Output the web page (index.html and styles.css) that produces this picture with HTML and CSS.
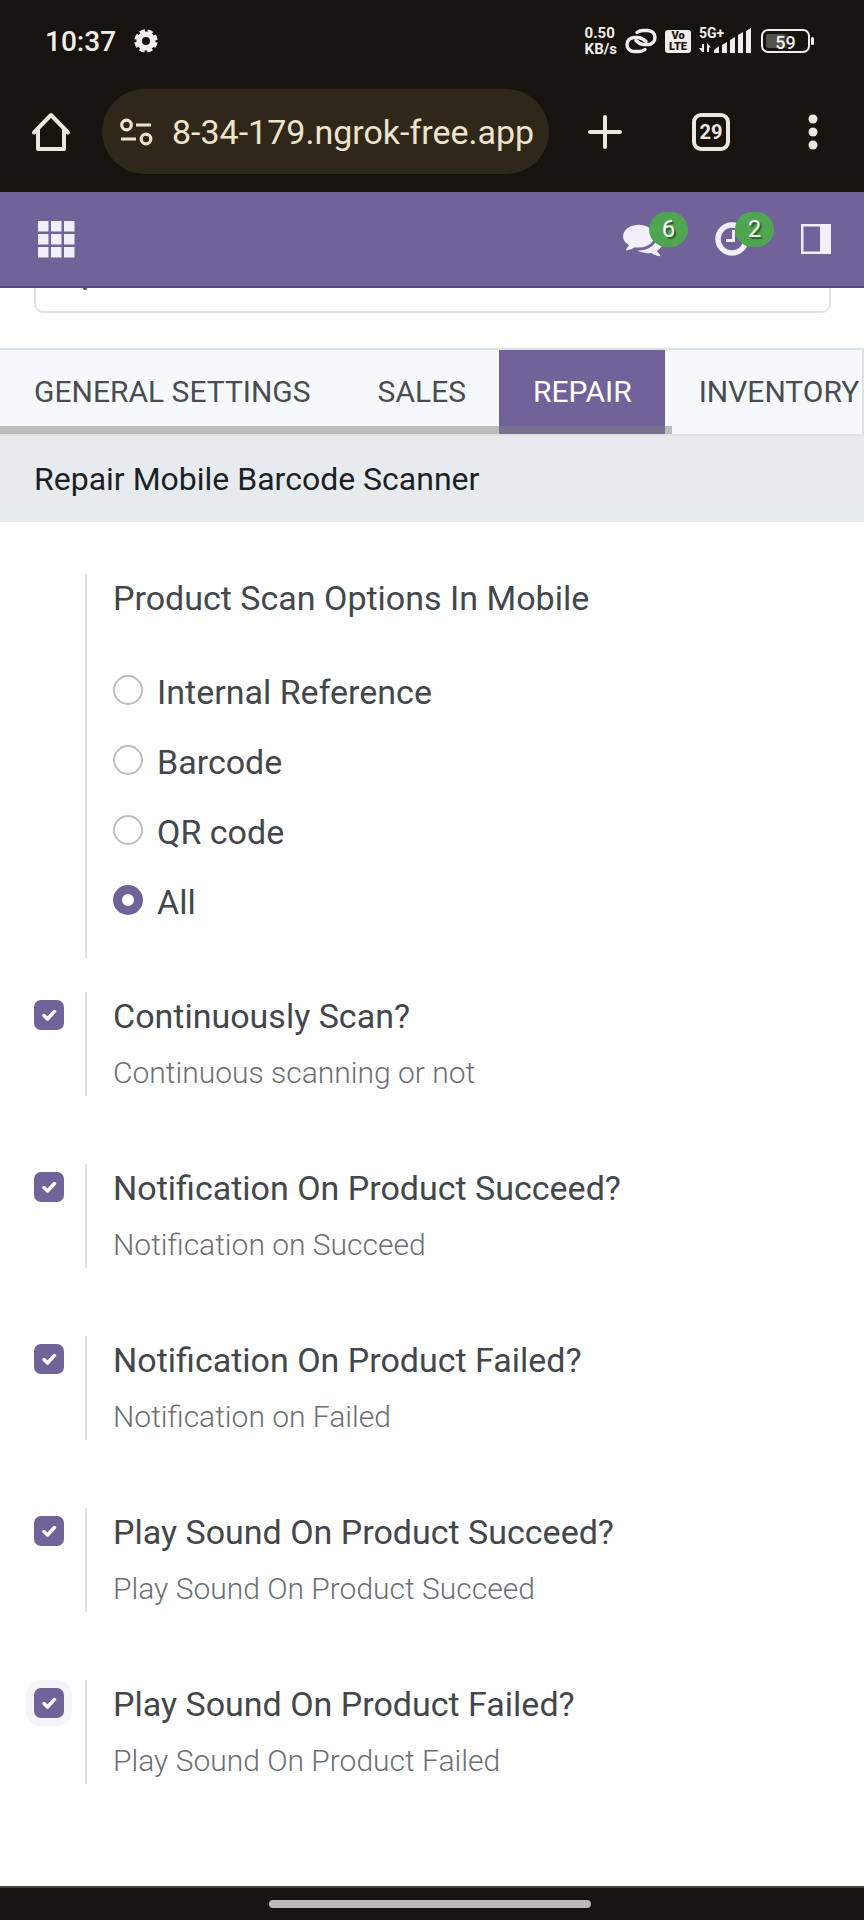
FILE: index.html
```html
<!DOCTYPE html>
<html lang="en">
<head>
    <meta charset="UTF-8">
    <meta name="viewport" content="width=device-width, initial-scale=1.0">
    <title>Settings</title>
    <link rel="stylesheet" href="styles.css">
</head>
<body>
    <!-- Phone status bar and browser toolbar -->
    <header class="browser">
        <div class="status-bar">
            <div class="status-left">
                <span class="clock">10:37</span>
                <svg class="gear" viewBox="0 0 24 24" width="24" height="24" fill="none" stroke="#f1ede9">
                    <circle cx="12" cy="12" r="6.800" stroke-width="5.600"/>
                    <circle cx="12" cy="12" r="10" stroke-width="3.400" stroke-dasharray="5.200 2.654" stroke-dashoffset="-1.300"/>
                </svg>
            </div>
            <div class="status-right">
                <div class="net-speed"><span>0.50</span><span>KB/s</span></div>
                <svg viewBox="0 0 32 26" width="32" height="26" fill="none" stroke="#f1ede9" stroke-width="3.400" stroke-linecap="round">
                    <path d="M12 4.500C14 3 16 2.500 18 2.500h5a7 7 0 0 1 0 14h-4c-3 0-5.500-1.500-8-4"/>
                    <path d="M20 21.500c-2 1.500-4 2-6 2H9a7 7 0 0 1 0-14h4c3 0 5.500 1.500 8 4"/>
                </svg>
                <div class="volte"><span>Vo</span><span>LTE</span></div>
                <div class="signal">
                    <span class="signal-type">5G+</span>
                    <svg viewBox="0 0 52 24" width="52" height="24" fill="#f1ede9">
                        <path d="M3 15h2v8H3L0 19h3zM8 23V14l4 4.500h-2V23z"/>
                        <path d="M15 24v-3l5-4v7zM23 24v-8l5-3v11zM31 24V11l5-3v16zM39 24V6l5-3v21zM47 24V2l5-3v25z"/>
                    </svg>
                </div>
                <div class="battery"><span>59</span></div>
            </div>
        </div>
        <div class="address-bar">
            <button class="icon-button" aria-label="Home">
                <svg viewBox="0 0 38 40" width="38" height="40" fill="none" stroke="#ece6df" stroke-width="4" stroke-linejoin="round" stroke-linecap="round">
                    <path d="M2 20.500 19 3l17 17.500M6 18v19h26V18"/>
                </svg>
            </button>
            <div class="url">
                <svg viewBox="0 0 34 28" width="34" height="28" fill="none" stroke="#efe3cb" stroke-width="3.200">
                    <circle cx="6.500" cy="7" r="4.800"/>
                    <circle cx="26" cy="21" r="4.800"/>
                    <path d="M16 7h15M1 21h15"/>
                </svg>
                <span>8-34-179.ngrok-free.app</span>
            </div>
            <div class="browser-actions">
                <button class="icon-button" aria-label="New tab">
                    <svg viewBox="0 0 34 34" width="34" height="34" stroke="#ece6df" stroke-width="4" stroke-linecap="round">
                        <path d="M17 2v30M2 17h30"/>
                    </svg>
                </button>
                <button class="tab-count" aria-label="Open tabs">29</button>
                <button class="icon-button" aria-label="More">
                    <svg viewBox="0 0 26 36" width="26" height="36" fill="#ece6df">
                        <circle cx="13" cy="5" r="4.500"/>
                        <circle cx="13" cy="18" r="4.500"/>
                        <circle cx="13" cy="31" r="4.500"/>
                    </svg>
                </button>
            </div>
        </div>
    </header>

    <nav class="navbar">
        <button class="icon-button" aria-label="Apps">
            <svg viewBox="0 0 37 37" width="37" height="37" fill="#f3effa">
                <path d="M0 0h10.500v10.500H0zM13 0h10.500v10.500H13zM26 0h10.500v10.500H26zM0 13h10.500v10.500H0zM13 13h10.500v10.500H13zM26 13h10.500v10.500H26zM0 26h10.500v10.500H0zM13 26h10.500v10.500H13zM26 26h10.500v10.500H26z"/>
            </svg>
        </button>
        <div class="systray">
            <button class="icon-button" aria-label="Messages">
                <svg viewBox="0 0 1792 1792" width="40" height="40" fill="#f3effa">
                    <path d="M1408 768q0 139-94 257t-256.500 186.500-353.500 68.500q-86 0-176-16-124 88-278 128-36 9-86 16h-3q-11 0-20.500-8t-11.500-21q-1-3-1-6.500t.5-6.500 2-6l2.500-5 3.500-5.500 4-5 4.500-5 4-4.500q5-6 23-25t26-29.500 22.500-29 25-38.500 20.500-44q-124-72-195-177t-71-224q0-139 94-257t256.500-186.500 353.500-68.500 353.500 68.500 256.500 186.500 94 257zm384 256q0 120-71 224.500t-195 176.500q10 24 20.500 44t25 38.500 22.500 29 26 29.500 23 25q1 1 4 4.500t4.500 5 4 5 3.500 5.500l2.500 5 2 6 .5 6.500-1 6.500q-3 14-13 22t-22 7q-50-7-86-16-154-40-278-128-90 16-176 16-271 0-472-132 58 4 88 4 161 0 309-45t264-129q125-92 192-212t67-254q0-77-23-152 129 71 204 178t75 230z"/>
                </svg>
                <span class="badge">6</span>
            </button>
            <button class="icon-button" aria-label="Activities">
                <svg viewBox="0 0 34 34" width="34" height="34" fill="none" stroke="#f3effa">
                    <circle cx="17" cy="17" r="14" stroke-width="5.500"/>
                    <path d="M18.500 8v10.500H11" stroke-width="3"/>
                </svg>
                <span class="badge">2</span>
            </button>
            <button class="icon-button" aria-label="Toggle panel">
                <svg viewBox="0 0 30 30" width="30" height="30" fill="#f3effa">
                    <path fill-rule="evenodd" d="M0 0h30v30H0zM2.500 2.500v25H19v-25z"/>
                </svg>
            </button>
        </div>
    </nav>

    <main>
        <!-- Only the lower edge of the search box shows under the navbar -->
        <div class="search-panel">
            <input class="search-input" type="search" aria-label="Search">
            <span class="search-tail"></span>
        </div>

        <div class="tabs">
            <a class="tab" href="#general">GENERAL SETTINGS</a>
            <a class="tab" href="#sales">SALES</a>
            <a class="tab active" href="#repair">REPAIR</a>
            <a class="tab" href="#inventory">INVENTORY</a>
            <span class="tabs-scrollbar"></span>
        </div>

        <h2 class="section-title">Repair Mobile Barcode Scanner</h2>

        <form class="settings">
            <div class="setting setting-options" role="radiogroup" aria-labelledby="scanTitle">
                <div class="setting-left"></div>
                <div class="setting-right">
                    <span class="setting-title" id="scanTitle">Product Scan Options In Mobile</span>
                    <div class="radio-list">
                        <label class="radio-item"><input type="radio" name="scan"><span>Internal Reference</span></label>
                        <label class="radio-item"><input type="radio" name="scan"><span>Barcode</span></label>
                        <label class="radio-item"><input type="radio" name="scan"><span>QR code</span></label>
                        <label class="radio-item"><input type="radio" name="scan" checked><span>All</span></label>
                    </div>
                </div>
            </div>

            <div class="setting">
                <div class="setting-left"><input type="checkbox" id="continuous" checked></div>
                <div class="setting-right">
                    <label class="setting-title" for="continuous">Continuously Scan?</label>
                    <p class="setting-help">Continuous scanning or not</p>
                </div>
            </div>
            <div class="setting">
                <div class="setting-left"><input type="checkbox" id="notifySucceed" checked></div>
                <div class="setting-right">
                    <label class="setting-title" for="notifySucceed">Notification On Product Succeed?</label>
                    <p class="setting-help">Notification on Succeed</p>
                </div>
            </div>
            <div class="setting">
                <div class="setting-left"><input type="checkbox" id="notifyFailed" checked></div>
                <div class="setting-right">
                    <label class="setting-title" for="notifyFailed">Notification On Product Failed?</label>
                    <p class="setting-help">Notification on Failed</p>
                </div>
            </div>
            <div class="setting">
                <div class="setting-left"><input type="checkbox" id="soundSucceed" checked></div>
                <div class="setting-right">
                    <label class="setting-title" for="soundSucceed">Play Sound On Product Succeed?</label>
                    <p class="setting-help">Play Sound On Product Succeed</p>
                </div>
            </div>
            <div class="setting">
                <div class="setting-left"><input type="checkbox" id="soundFailed" class="focused" checked></div>
                <div class="setting-right">
                    <label class="setting-title" for="soundFailed">Play Sound On Product Failed?</label>
                    <p class="setting-help">Play Sound On Product Failed</p>
                </div>
            </div>
        </form>
    </main>

    <footer class="gesture-bar"><span></span></footer>
</body>
</html>
```
FILE: styles.css
```css
* {
    box-sizing: border-box;
}

body {
    margin: 0;
    min-height: 100vh;
    display: flex;
    flex-direction: column;
    font-family: Roboto, "Liberation Sans", sans-serif;
    color: #43474c;
    background: #fefefe;
    overflow-x: hidden;
}

main {
    flex: 1;
}

button {
    font-family: inherit;
    cursor: pointer;
}

svg {
    display: block;
    overflow: visible;
}

.icon-button {
    position: relative;
    padding: 0;
    border: none;
    background: none;
}

/* Browser */
.browser {
    background: #17130e;
    border-bottom: 2px solid #1d0f0b;
    padding-bottom: 16px;
}

.status-bar {
    display: flex;
    justify-content: space-between;
    align-items: center;
    height: 89px;
    padding: 0 54px 7px 45px;
    color: #f1ede9;
}

.status-left,
.status-right {
    display: flex;
    align-items: center;
}

.status-left {
    gap: 18px;
}

.status-right {
    gap: 8px;
}

.clock {
    font-size: 28px;
    font-weight: 500;
}

.net-speed {
    display: flex;
    flex-direction: column;
    font-size: 15px;
    line-height: 16px;
    font-weight: 700;
}

.volte {
    display: flex;
    flex-direction: column;
    align-items: center;
    width: 26px;
    height: 23px;
    border-radius: 3px;
    background: #f1ede9;
    color: #17130e;
    font-size: 11px;
    line-height: 11px;
    font-weight: 900;
}

.signal {
    position: relative;
}

.signal-type {
    position: absolute;
    top: -3px;
    left: 0;
    font-size: 14px;
    line-height: 14px;
    font-weight: 700;
}

.battery {
    position: relative;
    width: 49px;
    height: 24px;
    margin-left: 2px;
    border: 2px solid #f1ede9;
    border-radius: 7px;
    background: linear-gradient(to right, #55524e 40%, #17130e 60%) content-box;
    padding: 3px;
    font-size: 18px;
    line-height: 18px;
    font-weight: 500;
    text-align: center;
}

.battery::after {
    content: "";
    position: absolute;
    top: 6px;
    right: -6px;
    width: 3px;
    height: 8px;
    border-radius: 2px;
    background: #f1ede9;
}

.address-bar {
    display: flex;
    align-items: center;
    padding: 0 38px 0 32px;
}

.url {
    flex: 1;
    display: flex;
    align-items: center;
    gap: 18px;
    height: 85px;
    margin: 0 39px 0 32px;
    padding-left: 18px;
    border-radius: 43px;
    background: #2f281a;
    color: #efe3cb;
    font-size: 34px;
    white-space: nowrap;
    overflow: hidden;
}

.browser-actions {
    display: flex;
    align-items: center;
    gap: 70px;
}

.tab-count {
    width: 38px;
    height: 38px;
    padding: 0;
    border: 4px solid #ece6df;
    border-radius: 9px;
    background: none;
    color: #ece6df;
    font-size: 20px;
    font-weight: 700;
}

/* Navbar */
.navbar {
    display: flex;
    justify-content: space-between;
    align-items: center;
    height: 96px;
    padding: 0 33px 0 38px;
    background: #71639a;
    border-bottom: 2px solid #54487a;
}

.systray {
    display: flex;
    align-items: center;
    gap: 52px;
}

.badge {
    position: absolute;
    bottom: calc(50% - 8px);
    right: -25px;
    width: 39px;
    height: 35px;
    border-radius: 18px;
    background: #50a650;
    color: #fff;
    font-size: 24px;
    line-height: 34px;
    text-shadow: 2px 2px 1px #2c5e2c;
}

/* Search */
.search-panel {
    position: relative;
    display: flex;
    align-items: flex-end;
    height: 60px;
    padding: 0 33px 35px 34px;
    overflow: hidden;
}

.search-input {
    flex: 1;
    height: 60px;
    padding: 0 34px;
    border: 2px solid #dfe3e5;
    border-radius: 9px;
    background: #fff;
    font-size: 30px;
}

.search-tail {
    position: absolute;
    top: 0;
    left: 83px;
    width: 4px;
    height: 2px;
    border-radius: 0 0 2px 2px;
    background: #43474c;
}

/* Tabs */
.tabs {
    position: relative;
    display: flex;
    border: 2px solid #dee2e4;
    border-left: none;
    background: #f6f9fc;
    overflow: hidden;
}

.tab {
    padding: 0 33px 0 34px;
    font-size: 30px;
    line-height: 84px;
    color: #4a4d50;
    text-decoration: none;
    white-space: nowrap;
}

.tab.active {
    background: #71639a;
    color: #fff;
}

.tabs-scrollbar {
    position: absolute;
    left: 0;
    bottom: 0;
    width: 78%;
    height: 8px;
    background: rgba(128, 128, 128, 0.5);
}

/* Settings */
.section-title {
    margin: 0;
    padding: 0 34px;
    background: #e8ebee;
    color: #1b1f26;
    font-size: 32px;
    line-height: 86px;
    font-weight: 400;
}

.settings {
    display: flex;
    flex-direction: column;
    gap: 68px;
    padding: 52px 34px;
}

.setting {
    display: flex;
}

.setting-options {
    margin-bottom: -34px;
}

.setting-left {
    width: 51px;
    padding-top: 8px;
}

.setting-right {
    flex: 1;
    padding-left: 26px;
    border-left: 2px solid #dfe0e3;
}

.setting-title {
    display: block;
    font-size: 34px;
    line-height: 48px;
}

.setting-help {
    margin: 10px 0 0;
    font-size: 30px;
    line-height: 46px;
    font-weight: 300;
    color: #6b7074;
}

.radio-list {
    display: flex;
    flex-direction: column;
    gap: 22px;
    padding: 46px 0 32px;
}

.radio-item {
    display: flex;
    gap: 14px;
    font-size: 34px;
    line-height: 48px;
}

input[type="radio"],
input[type="checkbox"] {
    appearance: none;
    display: block;
    width: 30px;
    height: 30px;
    margin: 0;
    border: 2px solid #bbbdc0;
    background: #fff;
}

input[type="radio"] {
    margin-top: 7px;
    border-radius: 50%;
}

input[type="radio"]:checked {
    border: 9px solid #71639a;
}

input[type="checkbox"] {
    border-radius: 7px;
}

input[type="checkbox"]:checked {
    border: none;
    background: #71639a url("data:image/svg+xml,%3Csvg xmlns='http://www.w3.org/2000/svg' viewBox='0 0 30 30'%3E%3Cpath d='M10 15.500l3.500 3.500 7-7.500' fill='none' stroke='white' stroke-width='3.500' stroke-linecap='round' stroke-linejoin='round'/%3E%3C/svg%3E");
}

input[type="checkbox"].focused {
    box-shadow: 0 0 0 8px #f5f4f8;
}

/* Gesture bar */
.gesture-bar {
    display: flex;
    justify-content: center;
    align-items: center;
    height: 34px;
    border-top: 2px solid #45423c;
    background: #17130e;
}

.gesture-bar span {
    width: 322px;
    height: 8px;
    margin-right: 4px;
    border-radius: 4px;
    background: #bcb8b6;
}
```
